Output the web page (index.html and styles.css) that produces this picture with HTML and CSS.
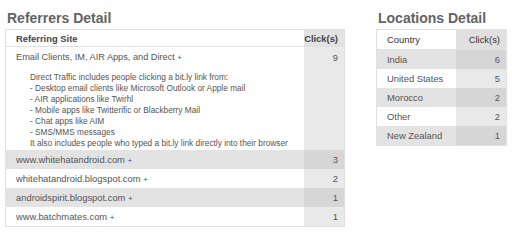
FILE: index.html
```html
<!DOCTYPE html>
<html>
<head>
<meta charset="utf-8">
<link rel="stylesheet" href="styles.css">
</head>
<body>
<div class="page">
  <section class="panel panel-ref">
    <h2 class="title">Referrers Detail</h2>
    <table class="grid">
      <thead>
        <tr><th class="name">Referring Site</th><th class="num">Click(s)</th></tr>
      </thead>
      <tbody>
        <tr class="odd">
          <td class="name">
            <div class="site">Email Clients, IM, AIR Apps, and Direct <span class="plus">+</span></div>
            <div class="desc">Direct Traffic includes people clicking a bit.ly link from:<br>
- Desktop email clients like Microsoft Outlook or Apple mail<br>
- AIR applications like Twirhl<br>
- Mobile apps like Twitterific or Blackberry Mail<br>
- Chat apps like AIM<br>
- SMS/MMS messages<br>
It also includes people who typed a bit.ly link directly into their browser</div>
          </td>
          <td class="num top">9</td>
        </tr>
        <tr class="even"><td class="name">www.whitehatandroid.com <span class="plus">+</span></td><td class="num">3</td></tr>
        <tr class="odd"><td class="name">whitehatandroid.blogspot.com <span class="plus">+</span></td><td class="num">2</td></tr>
        <tr class="even"><td class="name">androidspirit.blogspot.com <span class="plus">+</span></td><td class="num">1</td></tr>
        <tr class="odd"><td class="name">www.batchmates.com <span class="plus">+</span></td><td class="num">1</td></tr>
      </tbody>
    </table>
  </section>
  <section class="panel panel-loc">
    <h2 class="title">Locations Detail</h2>
    <table class="grid loc">
      <thead>
        <tr><th class="name">Country</th><th class="num">Click(s)</th></tr>
      </thead>
      <tbody>
        <tr class="even"><td class="name">India</td><td class="num">6</td></tr>
        <tr class="odd"><td class="name">United States</td><td class="num">5</td></tr>
        <tr class="even"><td class="name">Morocco</td><td class="num">2</td></tr>
        <tr class="odd"><td class="name">Other</td><td class="num">2</td></tr>
        <tr class="even"><td class="name">New Zealand</td><td class="num">1</td></tr>
      </tbody>
    </table>
  </section>
</div>
</body>
</html>
```
FILE: styles.css
```css
html, body {
  margin: 0;
  padding: 0;
  background: #fff;
}
body {
  font-family: "Liberation Sans", Arial, sans-serif;
  color: #555;
}
.page {
  display: flex;
  align-items: flex-start;
  gap: 31px;
  padding: 9px 0 0 5px;
}
.panel-ref { width: 340px; }
.panel-loc { width: 131px; }
.title {
  margin: 0 0 2px 2px;
  font-size: 14px;
  line-height: 18px;
  font-weight: bold;
  color: #636363;
}
.grid {
  width: 100%;
  border-collapse: collapse;
  border: 1px solid #e0e0e0;
  font-size: 9.4px;
}
.grid th {
  font-weight: bold;
  color: #444;
  text-align: left;
  height: 16px;
  padding: 0 7px 0 10px;
  border-bottom: 1px solid #e0e0e0;
}
.grid td {
  height: 19px;
  padding: 0 5px 0 10px;
}
.grid .num {
  width: 33px;
  text-align: right;
  padding-right: 6px;
  padding-left: 0;
}
.grid th.num { background: #e2e2e2; }
.grid td.top { vertical-align: top; padding-top: 5px; }
.odd td.name { background: #fff; }
.odd td.num { background: #e9e9e9; }
.even td.name { background: #e3e3e3; }
.even td.num { background: #d6d6d6; }
.site {
  padding-top: 5px;
  line-height: 11px;
  font-size: 9.2px;
}
.plus {
  color: #44547a;
  font-size: 8px;
}
.desc {
  font-size: 8.3px;
  line-height: 11px;
  padding: 9px 0 1px 14px;
  color: #555;
}
.loc th { height: 19px; font-weight: normal; color: #333; }
.loc .num { width: 44px; }
.loc th.num { background: #e0e0e0; }
```
